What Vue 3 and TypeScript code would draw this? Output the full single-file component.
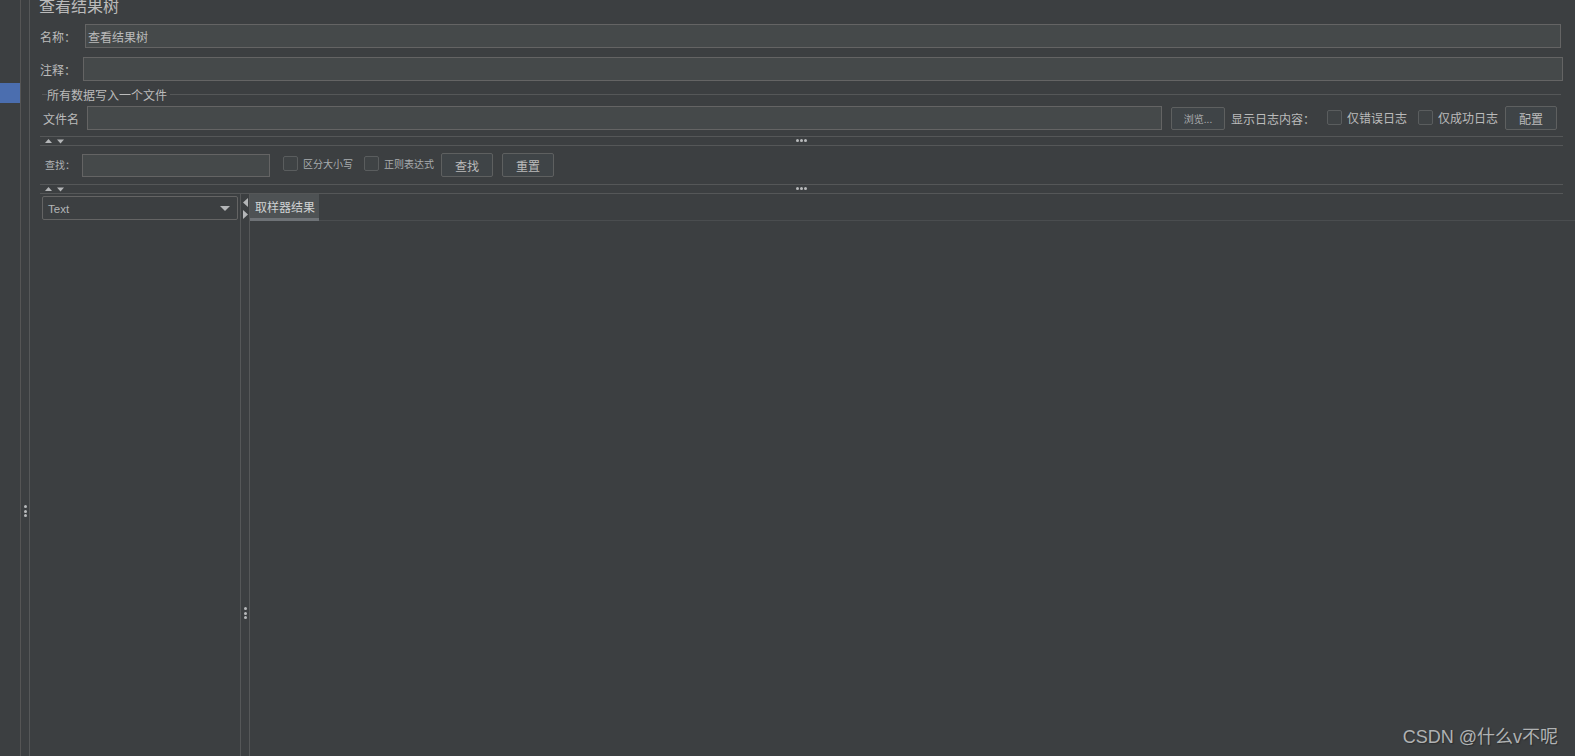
<script setup lang="ts">
const dots: number[] = [0, 1, 2]
</script>

<template>
  <div class="app">
    <aside class="rail">
      <div class="rail-selected"></div>
    </aside>
    <div class="rail-gutter">
      <div class="grip grip-v"><i v-for="d in dots" :key="d"></i></div>
    </div>
    <main class="main">
      <h1 class="title">查看结果树</h1>
      <div class="row row-name">
        <label class="lbl">名称：</label>
        <div class="input">查看结果树</div>
      </div>
      <div class="row row-comment">
        <label class="lbl">注释：</label>
        <div class="input"></div>
      </div>
      <section class="group">
        <div class="legend"><span>所有数据写入一个文件</span></div>
        <div class="row row-file">
          <label class="lbl-file">文件名</label>
          <div class="input file-input"></div>
          <button class="btn btn-browse">浏览...</button>
          <span class="lbl-log">显示日志内容：</span>
          <span class="check c1"></span><span class="check-text">仅错误日志</span>
          <span class="check c2"></span><span class="check-text">仅成功日志</span>
          <button class="btn btn-config">配置</button>
        </div>
      </section>
      <div class="divider">
        <svg class="arrows" width="19" height="5" viewBox="0 0 19 5"><path d="M3.5 0L7 4H0Z" fill="#b4b6b8" /><path d="M12 0.5H19L15.5 4.5Z" fill="#b4b6b8" /></svg>
        <div class="grip grip-h"><i v-for="d in dots" :key="d"></i></div>
      </div>
      <div class="row row-find">
        <label class="lbl-find">查找：</label>
        <div class="input find-input"></div>
        <span class="check c3"></span><span class="small">区分大小写</span>
        <span class="check c4"></span><span class="small">正则表达式</span>
        <button class="btn btn-find">查找</button>
        <button class="btn btn-reset">重置</button>
      </div>
      <div class="divider divider-2">
        <svg class="arrows" width="19" height="5" viewBox="0 0 19 5"><path d="M3.5 0L7 4H0Z" fill="#b4b6b8" /><path d="M12 0.5H19L15.5 4.5Z" fill="#b4b6b8" /></svg>
        <div class="grip grip-h"><i v-for="d in dots" :key="d"></i></div>
      </div>
      <div class="results">
        <div class="left">
          <div class="combo">
            <span>Text</span>
            <svg width="10" height="5" viewBox="0 0 10 5"><path d="M0 0H10L5 5Z" fill="#b4b6b8" /></svg>
          </div>
        </div>
        <div class="split">
          <svg class="tri tri-l" width="5" height="9" viewBox="0 0 5 9"><path d="M5 0V9L0 4.5Z" fill="#b4b6b8" /></svg>
          <svg class="tri tri-r" width="5" height="9" viewBox="0 0 5 9"><path d="M0 0V9L5 4.5Z" fill="#b4b6b8" /></svg>
          <div class="grip grip-v grip-split"><i v-for="d in dots" :key="d"></i></div>
        </div>
        <div class="right">
          <div class="tabs"><div class="tab">取样器结果</div></div>
        </div>
      </div>
    </main>
    <div class="watermark">CSDN @什么v不呢</div>
  </div>
</template>

<style>
html, body { margin: 0; background: #3c3f41; overflow: hidden; }
</style>

<style scoped>
.app {
  position: relative;
  display: flex;
  width: 1575px;
  height: 756px;
  overflow: hidden;
  background: #3c3f41;
  color: #bbbbbb;
  font: 12px "Noto Sans CJK SC", "Liberation Sans", sans-serif;
}
.rail { width: 20px; flex: none; border-right: 1px solid #555555; }
.rail-selected { height: 20px; margin-top: 83px; background: #4b6eaf; }
.rail-gutter {
  width: 8px;
  flex: none;
  border-right: 1px solid #555758;
  display: flex;
  justify-content: center;
  align-items: flex-start;
  padding-top: 505px;
}
.grip { display: flex; gap: 1.5px; }
.grip i { width: 3px; height: 3px; border-radius: 50%; background: #b8babb; display: block; }
.grip-v { flex-direction: column; }
.main { flex: 1; min-width: 0; display: flex; flex-direction: column; padding-left: 10px; }
.title {
  margin: -8px 0 0;
  height: 26px;
  font-size: 16px;
  font-weight: 400;
  line-height: 26px;
  flex: none;
  margin-left: -1px;
}
.row { display: flex; align-items: center; flex: none; }
.input {
  box-sizing: border-box;
  background: #45494a;
  border: 1px solid #646464;
  font-size: 12px;
  line-height: 23px;
  padding-left: 2px;
  color: #bbbbbb;
}
.row-name { height: 24px; margin-top: 6px; padding-right: 14px; }
.row-name .lbl { width: 45px; flex: none; }
.row-name .input { flex: 1; height: 24px; }
.row-comment { height: 24px; margin-top: 9px; padding-right: 12px; }
.row-comment .lbl { width: 43px; flex: none; }
.row-comment .input { flex: 1; height: 24px; }
.group { flex: none; }
.legend {
  margin-top: 6px;
  height: 14px;
  display: flex;
  align-items: center;
  margin-right: 14px;
}
.legend::before { content: ""; width: 5px; height: 1px; background: #555758; margin-left: 2px; flex: none; }
.legend::after { content: ""; flex: 1; height: 1px; background: #555758; }
.legend span { padding: 1px 3px 0 0; line-height: 14px; }
.row-file { height: 24px; margin-top: 5px; }
.lbl-file { width: 47px; padding-left: 3px; padding-top: 1px; box-sizing: border-box; flex: none; }
.file-input { width: 1075px; height: 24px; flex: none; }
.btn {
  box-sizing: border-box;
  background: #3f4447;
  border: 1px solid #5e6060;
  border-radius: 2px;
  color: #bbbbbb;
  font: 12px "Noto Sans CJK SC", "Liberation Sans", sans-serif;
  padding: 0;
  flex: none;
}
.btn-browse { width: 54px; height: 23px; margin-left: 9px; font-size: 10px; color: #a9abad; }
.lbl-log { margin-left: 6px; width: 96px; flex: none; white-space: nowrap; }
.check {
  box-sizing: border-box;
  width: 15px;
  height: 15px;
  border: 1px solid #5a5d5e;
  border-radius: 2px;
  background: #3f4345;
  flex: none;
}
.c1 { margin-top: -2px; }
.c2 { margin-top: -2px; margin-left: 11px; }
.check-text { margin-left: 5px; margin-top: -1px; width: 60px; flex: none; white-space: nowrap; }
.btn-config { width: 52px; height: 24px; margin-left: 7px; }
.divider {
  position: relative;
  box-sizing: border-box;
  flex: none;
  height: 10px;
  margin-top: 6px;
  margin-right: 12px;
  border-top: 1px solid #555758;
  border-bottom: 1px solid #555758;
}
.arrows { position: absolute; left: 5px; top: 2px; }
.grip-h { position: absolute; left: 756px; top: 2px; gap: 1px; }
.row-find { height: 24px; margin-top: 7px; }
.lbl-find { width: 42px; padding-left: 5px; padding-bottom: 1px; box-sizing: border-box; flex: none; font-size: 10px; color: #b0b3b5; }
.find-input { width: 188px; height: 23px; flex: none; }
.c3 { margin-left: 13px; margin-top: -3px; }
.c4 { margin-left: 10px; margin-top: -3px; }
.small { font-size: 10px; margin-left: 5px; margin-top: -3px; width: 51px; flex: none; white-space: nowrap; color: #a9adaf; }
.btn-find { width: 52px; height: 24px; margin-left: 6px; }
.btn-reset { width: 52px; height: 24px; margin-left: 9px; }
.divider-2 { margin-top: 7px; }
.results { flex: 1; display: flex; min-height: 0; }
.left { width: 201px; flex: none; box-sizing: border-box; padding: 2px 0 0 2px; border-right: 1px solid #555758; }
.combo {
  box-sizing: border-box;
  width: 196px;
  height: 24px;
  border: 1px solid #646464;
  border-radius: 2px;
  display: flex;
  align-items: center;
  justify-content: space-between;
  padding: 1px 7px 0 5px;
  font-size: 11.5px;
  color: #b3b5b7;
  font-family: "Liberation Sans", sans-serif;
}
.split {
  position: relative;
  width: 8px;
  flex: none;
  border-right: 1px solid #555758;
}
.tri { position: absolute; left: 2px; }
.tri-l { top: 4px; }
.tri-r { top: 16px; }
.grip-split { position: absolute; left: 3px; top: 413px; }
.right { flex: 1; min-width: 0; }
.tabs { height: 27px; box-sizing: border-box; border-bottom: 1px solid #4a4d4f; display: flex; }
.tab {
  width: 69px;
  height: 27px;
  box-sizing: border-box;
  background: #4e5254;
  border-bottom: 3px solid #6e7276;
  color: #d0d2d3;
  padding-left: 5px;
  line-height: 26px;
  white-space: nowrap;
}
.watermark {
  position: absolute;
  right: 17px;
  bottom: 6px;
  font-family: "Liberation Sans", "Noto Sans CJK SC", sans-serif;
  font-size: 18px;
  line-height: 26px;
  color: #b0b2b3;
  text-shadow: 1px 1px 1px #2c2e30;
  white-space: nowrap;
}
</style>
